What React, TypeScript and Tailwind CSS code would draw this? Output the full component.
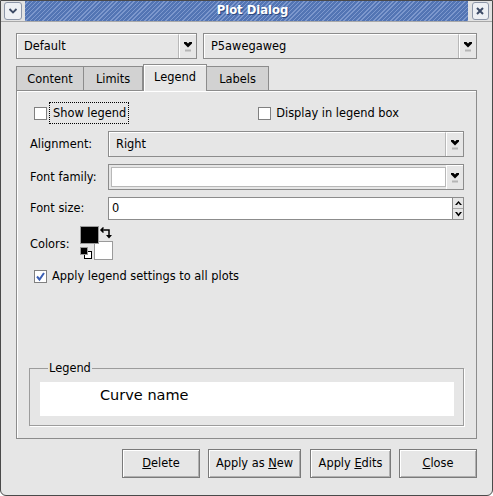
import React from "react";

function ComboArrow() {
  return (
    <svg width="8" height="11" viewBox="0 0 8 11">
      <polygon points="0,1 2.5,1 4,2.5 5.5,1 8,1 8,2.5 4,6.5 0,2.5" fill="#000" />
      <rect x="1" y="8.5" width="6" height="2" fill="#b4b4b4" />
    </svg>
  );
}

function Combo({ text, white, className }: { text: string; white?: boolean; className?: string }) {
  return (
    <div className={`flex border border-[#8c8c8c] bg-[#e6e6e6] ${className ?? ""}`}>
      <div
        className={`flex-1 flex items-center pl-[6px] pt-[1px] border-r border-[#b8b8b8] ${
          white ? "bg-white m-[2px] mr-0 border border-[#a0a0a0]" : "border-t border-l border-t-white border-l-white"
        }`}
      >
        {text}
      </div>
      <div className="w-[17px] flex items-center justify-center border-t border-l border-white">
        <ComboArrow />
      </div>
    </div>
  );
}

function Check({ checked }: { checked?: boolean }) {
  return (
    <div className="w-[13px] h-[13px] border border-[#808080] bg-white flex items-center justify-center">
      {checked && (
        <svg width="11" height="11" viewBox="0 0 11 11">
          <path d="M2 5.5 L4.5 8.5 L9 2" stroke="#3b5fb5" strokeWidth="2" fill="none" />
        </svg>
      )}
    </div>
  );
}

function Btn({ children, w }: { children: React.ReactNode; w: string }) {
  return (
    <div
      className={`${w} h-[29px] flex items-center justify-center pt-[1px] border border-[#7a7a7a] bg-[#e6e6e6] shadow-[inset_1px_1px_0_#ffffff,inset_-1px_-1px_0_#b0b0b0]`}
    >
      {children}
    </div>
  );
}

function ColorsWidget() {
  return (
    <svg width="34" height="34" viewBox="0 0 34 34">
      <rect x="14.5" y="15.5" width="18" height="18" fill="#fff" stroke="#9a9a9a" />
      <rect x="0.5" y="0.5" width="18" height="17" fill="#000" stroke="#9a9a9a" />
      <rect x="4.5" y="25.5" width="7" height="7" fill="#fff" stroke="#000" />
      <rect x="0.5" y="21.5" width="7" height="7" fill="#000" stroke="#9a9a9a" />
      <path d="M23.5 1.5 L21 4 L23.5 6.5 M21 4 H29 V9" stroke="#000" strokeWidth="1.5" fill="none" />
      <polygon points="26,9 32,9 29,12.5" fill="#000" />
    </svg>
  );
}

export default function App() {
  return (
    <div className="w-[493px] h-[496px] bg-white font-['DejaVu_Sans',sans-serif] text-[11.4px] text-black">
      <div className="w-[493px] h-[496px] flex flex-col border border-[#4a4a4a] rounded-b-[6px] overflow-hidden bg-[#e6e6e6]">
        {/* title bar */}
        <div className="h-[21px] flex items-stretch bg-[#e2e2e2] border-b border-[#a8a8a8]">
          <div className="w-[24px] flex items-center justify-center">
            <div className="w-[18px] h-[18px] rounded-[3px] border border-[#8d96a8] bg-[#eef0f4] flex items-center justify-center">
              <svg width="10" height="6" viewBox="0 0 10 6">
                <path d="M1.5 1 L5 4.5 L8.5 1" stroke="#3d4b66" strokeWidth="1.8" fill="none" />
              </svg>
            </div>
          </div>
          <div className="flex-1 flex items-center justify-center pl-[12px] bg-[repeating-linear-gradient(135deg,#5375b4_0px,#5375b4_2px,#7d98cd_2px,#7d98cd_3px)]">
            <span className="text-white font-bold text-[11.6px] [text-shadow:1px_1px_0_#2f4a80]">Plot Dialog</span>
          </div>
          <div className="w-[24px] flex items-center justify-center">
            <div className="w-[17px] h-[18px] rounded-[3px] border border-[#8d96a8] bg-[#eef0f4] flex items-center justify-center">
              <svg width="8" height="8" viewBox="0 0 8 8">
                <path d="M1 1 L7 7 M7 1 L1 7" stroke="#3d4b66" strokeWidth="2" />
              </svg>
            </div>
          </div>
        </div>

        {/* body */}
        <div className="flex-1 flex flex-col pl-[15px] pr-[15px] pt-[11px]">
          <div className="flex gap-[6px] h-[26px]">
            <Combo text="Default" className="w-[181px]" />
            <Combo text="P5awegaweg" className="flex-1" />
          </div>

          {/* tabs */}
          <div className="mt-[5px] h-[26px] flex items-end">
            <div className="w-[68px] h-[24px] flex items-center justify-center pt-[2px] bg-[#d2d2d2] border border-[#8c8c8c] border-b-0">
              Content
            </div>
            <div className="w-[59px] h-[24px] flex items-center justify-center pt-[2px] bg-[#d2d2d2] border border-[#8c8c8c] border-l-0 border-b-0">
              Limits
            </div>
            <div className="w-[64px] h-[27px] -mb-[1px] relative z-10 flex items-center justify-center bg-[#e6e6e6] border border-[#8c8c8c] border-b-0 shadow-[inset_1px_1px_0_#ffffff]">
              Legend
            </div>
            <div className="w-[62px] h-[24px] flex items-center justify-center pt-[2px] bg-[#d2d2d2] border border-[#8c8c8c] border-l-0 border-b-0">
              Labels
            </div>
          </div>

          {/* panel */}
          <div className="h-[349px] flex flex-col border border-[#8c8c8c] shadow-[inset_1px_1px_0_#ffffff]">
            <div className="mt-[11px] h-[22px] flex items-center pl-[17px]">
              <Check />
              <div className="ml-[2px] h-[22px] flex items-center pl-[3px] pr-[2px] pt-[2px] whitespace-nowrap border border-dotted border-black">
                Show legend
              </div>
              <div className="ml-[129px]">
                <Check />
              </div>
              <span className="ml-[5px] pt-[2px]">Display in legend box</span>
            </div>

            <div className="mt-[7px] flex items-center pl-[13px] pr-[12px]">
              <div className="w-[78px] pt-[1px]">Alignment:</div>
              <Combo text="Right" className="flex-1 h-[26px]" />
            </div>
            <div className="mt-[7px] flex items-center pl-[13px] pr-[12px]">
              <div className="w-[78px] pt-[1px]">Font family:</div>
              <Combo text="" white className="flex-1 h-[26px]" />
            </div>
            <div className="mt-[7px] flex items-center pl-[13px] pr-[12px]">
              <div className="w-[78px] pt-[1px]">Font size:</div>
              <div className="flex-1 h-[23px] flex">
                <div className="flex-1 bg-white border border-[#8c8c8c] flex items-center pl-[3px] pt-[1px]">0</div>
                <div className="w-[11px] flex flex-col border border-l-0 border-[#8c8c8c]">
                  <div className="flex-1 flex items-center justify-center border-b border-[#a8a8a8] bg-[#e6e6e6]">
                    <svg width="7" height="5" viewBox="0 0 7 5">
                      <polygon points="3.5,0 7,4 5,4 3.5,2 2,4 0,4" fill="#000" />
                    </svg>
                  </div>
                  <div className="flex-1 flex items-center justify-center bg-[#e6e6e6]">
                    <svg width="7" height="5" viewBox="0 0 7 5">
                      <polygon points="0,0 2,0 3.5,2 5,0 7,0 3.5,4.5" fill="#000" />
                    </svg>
                  </div>
                </div>
              </div>
            </div>
            <div className="mt-[6px] flex items-center pl-[13px]">
              <div className="w-[50px] pt-[3px]">Colors:</div>
              <ColorsWidget />
            </div>
            <div className="mt-[5px] h-[22px] flex items-center pl-[17px]">
              <Check checked />
              <span className="ml-[5px] pt-[2px]">Apply legend settings to all plots</span>
            </div>

            <fieldset className="mt-auto mb-[12px] mx-[12px] border border-[#9c9c9c] shadow-[1px_1px_0_#ffffff] pl-[10px] pr-[9px] pt-[7px] pb-[9px]">
              <legend className="ml-[8px] px-[1px] leading-[14px]">Legend</legend>
              <div className="h-[34px] bg-white flex items-start pt-[3px] pl-[60px] text-[14.5px]">Curve name</div>
            </fieldset>
          </div>

          {/* buttons */}
          <div className="mt-[10px] flex justify-end">
            <Btn w="w-[78px]">
              <span><u>D</u>elete</span>
            </Btn>
            <div className="ml-[8px]">
              <Btn w="w-[93px]">
                <span>Apply as <u>N</u>ew</span>
              </Btn>
            </div>
            <div className="ml-[9px]">
              <Btn w="w-[81px]">
                <span>Apply <u>E</u>dits</span>
              </Btn>
            </div>
            <div className="ml-[8px]">
              <Btn w="w-[78px]">
                <span><u>C</u>lose</span>
              </Btn>
            </div>
          </div>
        </div>
      </div>
    </div>
  );
}
